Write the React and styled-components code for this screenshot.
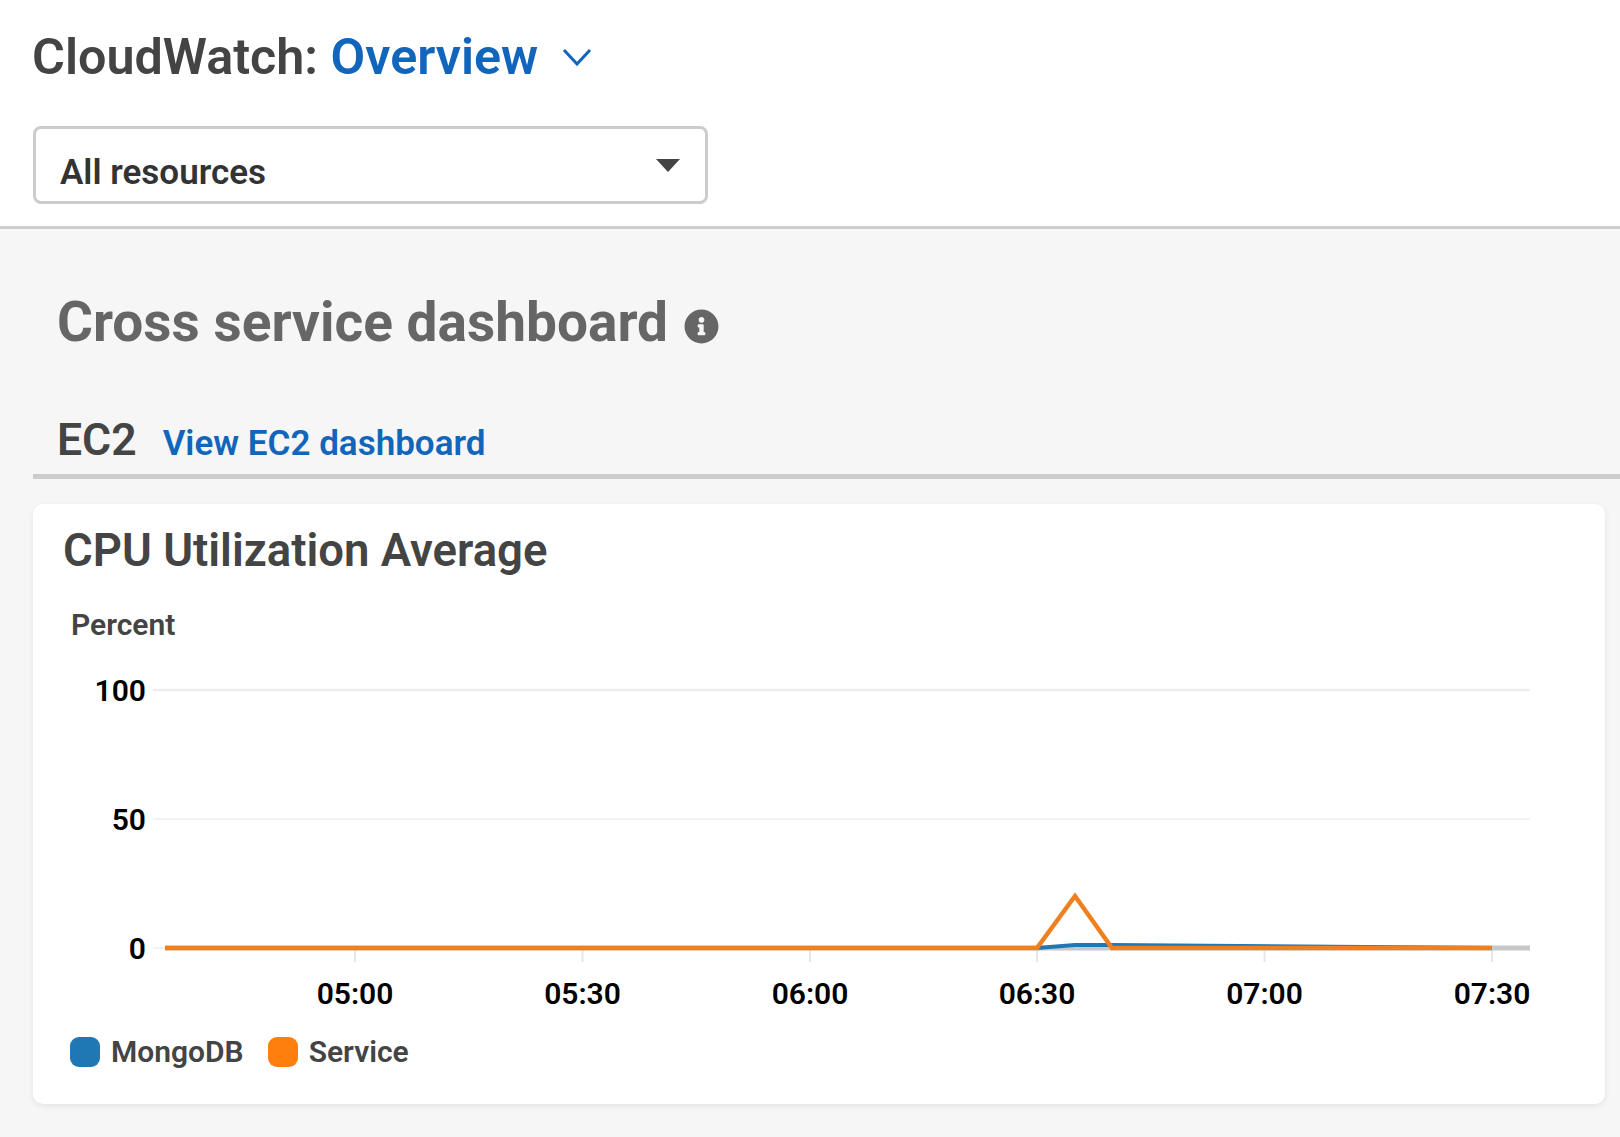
import React from "react";
import styled, { createGlobalStyle } from "styled-components";
import { FaInfoCircle } from "react-icons/fa";

const GlobalStyle = createGlobalStyle`
  html, body {
    margin: 0;
    padding: 0;
    background: #f6f6f6;
    font-family: Roboto, "Liberation Sans", sans-serif;
  }
`;

const ticks = [
  { x: 322, label: "05:00" },
  { x: 549.5, label: "05:30" },
  { x: 777, label: "06:00" },
  { x: 1004, label: "06:30" },
  { x: 1231.5, label: "07:00" },
  { x: 1459, label: "07:30" },
];

const yLabels = [
  { y: 96, label: "100", light: false },
  { y: 225, label: "50", light: true },
  { y: 354, label: "0", light: true },
];

const CpuChart = () => (
  <ChartSvg viewBox="0 0 1571 420" width="1571" height="420">
    {yLabels.map((row) => (
      <g key={row.label}>
        <line x1="120" x2="1497" y1={row.y} y2={row.y} stroke="#eeeeee" strokeWidth={row.light ? 1.5 : 2.5} />
        <text x="113" y={row.y + 11} textAnchor="end" fontSize="30" fontWeight="600" fill="#000">
          {row.label}
        </text>
      </g>
    ))}
    {ticks.map((tick) => (
      <g key={tick.label}>
        <line x1={tick.x} x2={tick.x} y1="354" y2="368" stroke="#e6e6e6" strokeWidth="2" />
        <text x={tick.x} y="410" textAnchor="middle" fontSize="30" fontWeight="600" fill="#000">
          {tick.label}
        </text>
      </g>
    ))}
    <line x1="132" x2="1497" y1="354" y2="354" stroke="#c8c8c8" strokeWidth="5" />
    <polyline
      points="1004,354 1042,351 1079,351 1459,354"
      fill="none"
      stroke="#1f77b4"
      strokeWidth="4"
    />
    <polyline
      points="132,354 1004,354 1042,302 1079,354 1459,354"
      fill="none"
      stroke="#f0801f"
      strokeWidth="4.5"
    />
  </ChartSvg>
);

const App = () => (
  <Page>
    <GlobalStyle />
    <Header>
      <TitleRow>
        <Title>
          CloudWatch: <TitleLink>Overview</TitleLink>
        </Title>
        <svg width="30" height="18" viewBox="0 0 30 18" fill="none">
          <path d="M2 2 L15 16 L28 2" stroke="#1166bb" strokeWidth="3" />
        </svg>
      </TitleRow>
      <Select>
        <SelectText>All resources</SelectText>
        <Caret />
      </Select>
    </Header>
    <Content>
      <DashboardTitle>
        Cross service dashboard
        <InfoIcon size={35} color="#666" />
      </DashboardTitle>
      <SectionHead>
        <SectionName>EC2</SectionName>
        <SectionLink>View EC2 dashboard</SectionLink>
      </SectionHead>
      <Card>
        <CardTitle>CPU Utilization Average</CardTitle>
        <AxisUnit>Percent</AxisUnit>
        <CpuChart />
        <Legend>
          <LegendItem>
            <Swatch $color="#1f77b4" />
            MongoDB
          </LegendItem>
          <LegendItem>
            <Swatch $color="#ff7f0e" />
            Service
          </LegendItem>
        </Legend>
      </Card>
    </Content>
  </Page>
);

const Page = styled.div`
  width: 1620px;
  height: 1137px;
  overflow: hidden;
  background: #f6f6f6;
`;
const Header = styled.header`
  height: 226px;
  background: #fff;
  border-bottom: 3px solid #cccccc;
  padding-left: 33px;
  display: flex;
  flex-direction: column;
`;
const TitleRow = styled.div`
  height: 126px;
  display: flex;
  align-items: center;
  gap: 24px;
  padding-bottom: 12px;
  box-sizing: border-box;
`;
const Title = styled.h1`
  margin: 0 0 0 -1px;
  font-size: 50.3px;
  font-weight: 600;
  color: #444;
  line-height: 56px;
`;
const TitleLink = styled.span`
  color: #1166bb;
`;
const Select = styled.div`
  width: 675px;
  height: 78px;
  box-sizing: border-box;
  border: 3px solid #cccccc;
  border-radius: 8px;
  background: #fff;
  display: flex;
  align-items: center;
  justify-content: space-between;
  padding: 0 25px 0 24px;
`;
const SelectText = styled.span`
  font-size: 35px;
  font-weight: 600;
  color: #333;
  padding-top: 15px;
`;
const Caret = styled.span`
  width: 0;
  height: 0;
  border-left: 12.5px solid transparent;
  border-right: 12.5px solid transparent;
  border-top: 13px solid #444;
`;
const Content = styled.main`
  padding: 0 15px 0 33px;
`;
const DashboardTitle = styled.h2`
  margin: 0;
  padding: 61px 0 0 24px;
  height: 64px;
  display: flex;
  align-items: center;
  gap: 16px;
  font-size: 55px;
  font-weight: 700;
  color: #666;
  line-height: 64px;
`;
const InfoIcon = styled(FaInfoCircle)`
  margin-top: 9px;
`;
const SectionHead = styled.div`
  margin-top: 60px;
  margin-right: -15px;
  height: 60px;
  padding-left: 24px;
  border-bottom: 5px solid #cccccc;
  display: flex;
  align-items: baseline;
  gap: 26px;
`;
const SectionName = styled.span`
  font-size: 44.5px;
  font-weight: 600;
  color: #444;
`;
const SectionLink = styled.span`
  font-size: 35px;
  font-weight: 600;
  color: #1166bb;
`;
const Card = styled.section`
  margin-top: 25px;
  height: 600px;
  background: #fff;
  border-radius: 10px;
  box-shadow: 0 2px 6px rgba(0, 0, 0, 0.08);
`;
const CardTitle = styled.h3`
  margin: 0;
  padding: 22px 0 0 30px;
  font-size: 45.5px;
  font-weight: 600;
  color: #444;
  line-height: 50px;
`;
const AxisUnit = styled.div`
  margin-top: 31px;
  padding-left: 38px;
  font-size: 30px;
  font-weight: 600;
  color: #444;
  line-height: 36px;
`;
const ChartSvg = styled.svg`
  display: block;
  margin-top: -49px;
  font-family: Roboto, "Liberation Sans", sans-serif;
`;
const Legend = styled.div`
  display: flex;
  gap: 24px;
  padding-left: 37px;
  margin-top: 20px;
`;
const LegendItem = styled.div`
  display: flex;
  align-items: center;
  gap: 11px;
  font-size: 30px;
  font-weight: 600;
  color: #444;
`;
const Swatch = styled.span`
  width: 30px;
  height: 30px;
  border-radius: 9px;
  background: ${(props) => props.$color};
`;

export default App;
